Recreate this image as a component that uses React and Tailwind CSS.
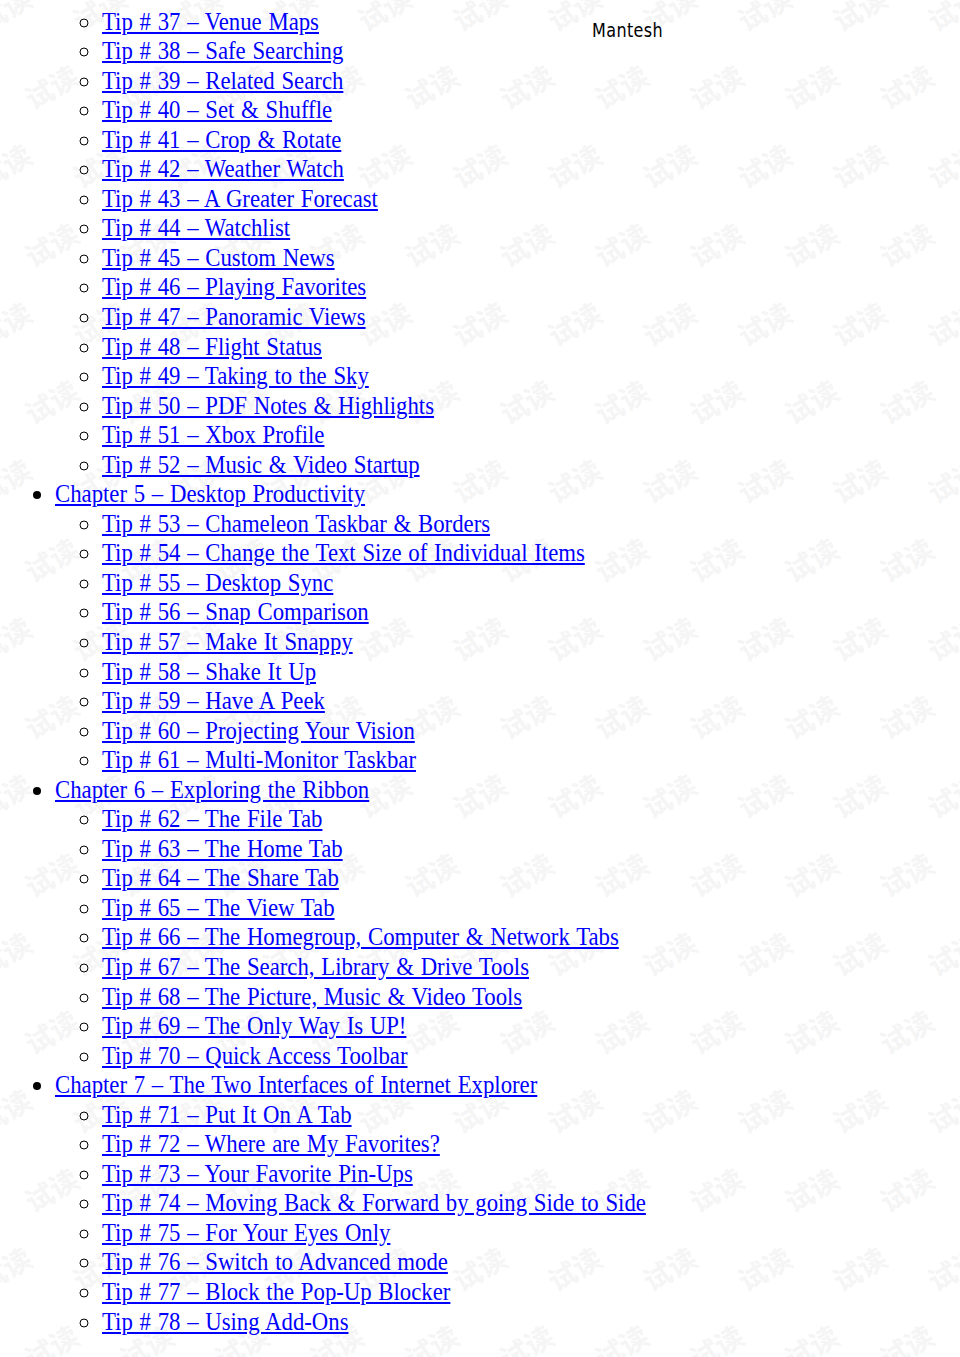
import React from 'react';

const sections = [
  { tips: ['Tip # 37 – Venue Maps', 'Tip # 38 – Safe Searching', 'Tip # 39 – Related Search', 'Tip # 40 – Set & Shuffle', 'Tip # 41 – Crop & Rotate', 'Tip # 42 – Weather Watch', 'Tip # 43 – A Greater Forecast', 'Tip # 44 – Watchlist', 'Tip # 45 – Custom News', 'Tip # 46 – Playing Favorites', 'Tip # 47 – Panoramic Views', 'Tip # 48 – Flight Status', 'Tip # 49 – Taking to the Sky', 'Tip # 50 – PDF Notes & Highlights', 'Tip # 51 – Xbox Profile', 'Tip # 52 – Music & Video Startup'] },
  { title: 'Chapter 5 – Desktop Productivity', tips: ['Tip # 53 – Chameleon Taskbar & Borders', 'Tip # 54 – Change the Text Size of Individual Items', 'Tip # 55 – Desktop Sync', 'Tip # 56 – Snap Comparison', 'Tip # 57 – Make It Snappy', 'Tip # 58 – Shake It Up', 'Tip # 59 – Have A Peek', 'Tip # 60 – Projecting Your Vision', 'Tip # 61 – Multi-Monitor Taskbar'] },
  { title: 'Chapter 6 – Exploring the Ribbon', tips: ['Tip # 62 – The File Tab', 'Tip # 63 – The Home Tab', 'Tip # 64 – The Share Tab', 'Tip # 65 – The View Tab', 'Tip # 66 – The Homegroup, Computer & Network Tabs', 'Tip # 67 – The Search, Library & Drive Tools', 'Tip # 68 – The Picture, Music & Video Tools', 'Tip # 69 – The Only Way Is UP!', 'Tip # 70 – Quick Access Toolbar'] },
  { title: 'Chapter 7 – The Two Interfaces of Internet Explorer', tips: ['Tip # 71 – Put It On A Tab', 'Tip # 72 – Where are My Favorites?', 'Tip # 73 – Your Favorite Pin-Ups', 'Tip # 74 – Moving Back & Forward by going Side to Side', 'Tip # 75 – For Your Eyes Only', 'Tip # 76 – Switch to Advanced mode', 'Tip # 77 – Block the Pop-Up Blocker', 'Tip # 78 – Using Add-Ons'] },
];

const rows = Array.from({ length: 18 }, (_, i) => i);
const cols = Array.from({ length: 11 }, (_, i) => i);

function Watermarks() {
  return (
    <div className="absolute inset-0 overflow-hidden select-none">
      {rows.map((r) =>
        cols.map((c) => (
          <span
            key={`${r}-${c}`}
            className="absolute -rotate-[30deg] text-[28px] font-bold leading-none whitespace-nowrap text-[#f5f5f5] font-['Noto_Sans_CJK_SC',sans-serif]"
            style={{ left: c * 95 + (r % 2 ? 51 : 4) - 28, top: r * 78.75 + 7.5 - 14 }}
          >
            试读
          </span>
        ))
      )}
    </div>
  );
}

function Link({ children }) {
  return (
    <a href="#" className="inline-block origin-left scale-x-[0.875] [word-spacing:1.2px] whitespace-nowrap text-[#0000ff] underline">
      {children}
    </a>
  );
}

function Tips({ tips }) {
  return (
    <ul className="list-[circle] pl-[47px]">
      {tips.map((tip) => (
        <li key={tip}>
          <Link>{tip}</Link>
        </li>
      ))}
    </ul>
  );
}

export default function App() {
  return (
    <div className="relative w-[960px] h-[1357px] overflow-hidden bg-white text-black">
      <Watermarks />
      <span className="absolute left-[592px] top-[18px] origin-left scale-x-[0.8] text-[20px] leading-[24px] tracking-[0.5px] whitespace-nowrap font-['DejaVu_Sans',sans-serif] text-black">Mantesh</span>
      <ul className="relative list-disc pl-[55px] pt-[6.5px] text-[26px] leading-[29.55px] font-['Liberation_Serif',serif]">
        {sections.map((s, i) =>
          s.title ? (
            <li key={i}>
              <Link>{s.title}</Link>
              <Tips tips={s.tips} />
            </li>
          ) : (
            <li key={i} className="list-none">
              <Tips tips={s.tips} />
            </li>
          )
        )}
      </ul>
    </div>
  );
}
